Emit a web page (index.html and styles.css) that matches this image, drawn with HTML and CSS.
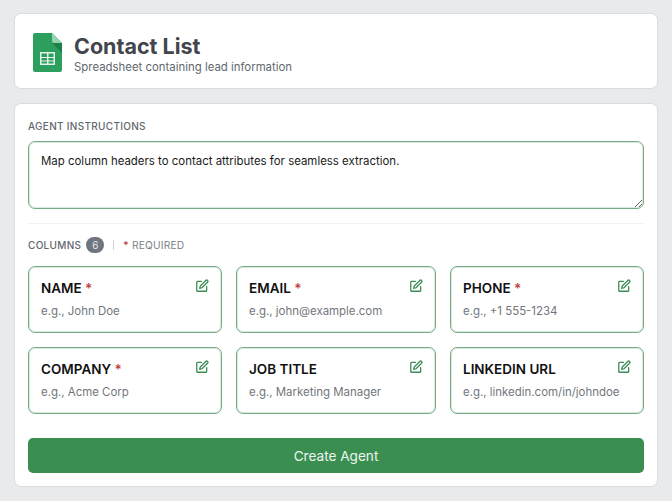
FILE: index.html
```html
<!DOCTYPE html>
<html lang="en">
<head>
<meta charset="utf-8">
<title>Contact List</title>
<link rel="stylesheet" href="styles.css">
</head>
<body>
<main class="page">
  <header class="card head">
    <svg class="sheet" viewBox="0 0 29 39" width="29" height="39" aria-hidden="true">
      <path d="M2 0H19L29 10V37a2 2 0 0 1-2 2H2a2 2 0 0 1-2-2V2a2 2 0 0 1 2-2Z" fill="#2c9e5d"/>
      <path d="M19 10L29 20V10Z" fill="#1f7f4a"/>
      <path d="M19 0L29 10H21a2 2 0 0 1-2-2Z" fill="#93d3ae"/>
      <path d="M7 19H22V32H7Z M8.500 20.500V24H14V20.500Z M15.500 20.500V24H20.500V20.500Z M8.500 25V27.500H14V25Z M15.500 25V27.500H20.500V25Z M8.500 28.500V30.500H14V28.500Z M15.500 28.500V30.500H20.500V28.500Z" fill="#e3f4ea" fill-rule="evenodd"/>
    </svg>
    <div class="head-text">
      <h1>Contact List</h1>
      <p>Spreadsheet containing lead information</p>
    </div>
  </header>
  <section class="card body">
    <label class="label">AGENT INSTRUCTIONS</label>
    <textarea class="instructions">Map column headers to contact attributes for seamless extraction.</textarea>
    <hr class="rule">
    <div class="meta">
      <span class="label">COLUMNS</span>
      <span class="badge">6</span>
      <span class="sep"></span>
      <span class="req"><b>*</b> REQUIRED</span>
    </div>
    <div class="grid">
      <div class="col"><div class="col-name">NAME <b>*</b></div><div class="col-hint">e.g., John Doe</div><svg class="edit" viewBox="0 0 24 24"><path d="M11 4H4.500A1.500 1.500 0 0 0 3 5.500V19.500A1.500 1.500 0 0 0 4.500 21H18.500A1.500 1.500 0 0 0 20 19.500V13"/><path d="M18.500 2.500a2.100 2.100 0 0 1 3 3L12 15l-4 1 1-4Z"/></svg></div>
      <div class="col"><div class="col-name">EMAIL <b>*</b></div><div class="col-hint">e.g., john@example.com</div><svg class="edit" viewBox="0 0 24 24"><path d="M11 4H4.500A1.500 1.500 0 0 0 3 5.500V19.500A1.500 1.500 0 0 0 4.500 21H18.500A1.500 1.500 0 0 0 20 19.500V13"/><path d="M18.500 2.500a2.100 2.100 0 0 1 3 3L12 15l-4 1 1-4Z"/></svg></div>
      <div class="col"><div class="col-name">PHONE <b>*</b></div><div class="col-hint">e.g., +1 555-1234</div><svg class="edit" viewBox="0 0 24 24"><path d="M11 4H4.500A1.500 1.500 0 0 0 3 5.500V19.500A1.500 1.500 0 0 0 4.500 21H18.500A1.500 1.500 0 0 0 20 19.500V13"/><path d="M18.500 2.500a2.100 2.100 0 0 1 3 3L12 15l-4 1 1-4Z"/></svg></div>
      <div class="col"><div class="col-name">COMPANY <b>*</b></div><div class="col-hint">e.g., Acme Corp</div><svg class="edit" viewBox="0 0 24 24"><path d="M11 4H4.500A1.500 1.500 0 0 0 3 5.500V19.500A1.500 1.500 0 0 0 4.500 21H18.500A1.500 1.500 0 0 0 20 19.500V13"/><path d="M18.500 2.500a2.100 2.100 0 0 1 3 3L12 15l-4 1 1-4Z"/></svg></div>
      <div class="col"><div class="col-name">JOB TITLE</div><div class="col-hint">e.g., Marketing Manager</div><svg class="edit" viewBox="0 0 24 24"><path d="M11 4H4.500A1.500 1.500 0 0 0 3 5.500V19.500A1.500 1.500 0 0 0 4.500 21H18.500A1.500 1.500 0 0 0 20 19.500V13"/><path d="M18.500 2.500a2.100 2.100 0 0 1 3 3L12 15l-4 1 1-4Z"/></svg></div>
      <div class="col"><div class="col-name">LINKEDIN URL</div><div class="col-hint">e.g., linkedin.com/in/johndoe</div><svg class="edit" viewBox="0 0 24 24"><path d="M11 4H4.500A1.500 1.500 0 0 0 3 5.500V19.500A1.500 1.500 0 0 0 4.500 21H18.500A1.500 1.500 0 0 0 20 19.500V13"/><path d="M18.500 2.500a2.100 2.100 0 0 1 3 3L12 15l-4 1 1-4Z"/></svg></div>
    </div>
    <button class="create" type="button">Create Agent</button>
  </section>
</main>
</body>
</html>
```

FILE: styles.css
```css
* { box-sizing: border-box; }
html, body { margin: 0; height: 501px; overflow: hidden; }
body {
  background: #e9eaec;
  font-family: Inter, "Liberation Sans", sans-serif;
  color: #111;
}
.page {
  display: flex;
  flex-direction: column;
  gap: 14px;
  padding: 13px 14px 0;
}
.card {
  background: #fff;
  border: 1px solid #d9dbdf;
  border-radius: 7px;
}
.head {
  height: 76px;
  display: flex;
  align-items: center;
  gap: 12px;
  padding: 0 18px;
}
.sheet { flex: none; margin-top: 2px; }
.head-text { display: flex; flex-direction: column; margin-top: 5px; }
h1 {
  margin: 0;
  font-size: 21.500px;
  line-height: 26px;
  font-weight: 700;
  color: #42454c;
}
.head-text p {
  margin: 0;
  font-size: 11.400px;
  line-height: 16px;
  color: #62676e;
}
.body {
  height: 384px;
  padding: 15px 13px 0;
  display: flex;
  flex-direction: column;
}
.label {
  font-size: 10px;
  line-height: 14px;
  font-weight: 500;
  letter-spacing: 0.3px;
  color: #62676e;
}
.instructions {
  display: block;
  width: 100%;
  height: 67.500px;
  margin-top: 8px;
  padding: 10px 12px;
  border: 1px solid #76ac86;
  box-shadow: inset 0 0 0 1px rgba(134, 183, 149, 0.3);
  border-radius: 7px;
  font: 400 11.450px/18px Inter, "Liberation Sans", sans-serif;
  color: #1a1a1a;
  outline: none;
  resize: vertical;
}
.rule {
  width: 100%;
  margin: 14.500px 0 0;
  border: 0;
  border-top: 1px solid #f0f1f2;
}
.meta {
  display: flex;
  align-items: center;
  height: 18px;
  margin-top: 12px;
}
.badge {
  width: 18px;
  height: 16px;
  margin-left: 5px;
  border-radius: 8px;
  background: #6f7680;
  color: #e6e8ea;
  font-size: 10px;
  line-height: 16px;
  text-align: center;
}
.sep {
  width: 1px;
  height: 10px;
  margin: 0 9px 0 9px;
  background: #d3d5d8;
}
.req {
  font-size: 10.200px;
  color: #7a7f86;
  letter-spacing: 0.2px;
}
.req b { color: #b8403c; font-weight: 500; }
.grid {
  display: grid;
  grid-template-columns: 194fr 200fr 194fr;
  grid-auto-rows: 67px;
  gap: 14px;
  margin-top: 12px;
}
.col {
  position: relative;
  padding: 12px 12px 0;
  border: 1px solid #76ac86;
  box-shadow: inset 0 0 0 1px rgba(134, 183, 149, 0.3);
  border-radius: 7px;
}
.col-name {
  font-size: 13.500px;
  line-height: 18px;
  font-weight: 600;
  color: #111;
}
.col-name b { color: #c0403c; font-weight: 600; }
.col-hint {
  margin-top: 6px;
  font-size: 11.450px;
  line-height: 16px;
  color: #72767c;
}
.edit {
  position: absolute;
  top: 12px;
  right: 12px;
  width: 14px;
  height: 14px;
  fill: none;
  stroke: #3c8c54;
  stroke-width: 2.200;
  stroke-linecap: round;
  stroke-linejoin: round;
}
.create {
  height: 35px;
  margin-top: 24px;
  border: 0;
  border-radius: 5px;
  background: #3a8f50;
  color: #eef5f0;
  font: 400 13.600px Inter, "Liberation Sans", sans-serif;
}
```
